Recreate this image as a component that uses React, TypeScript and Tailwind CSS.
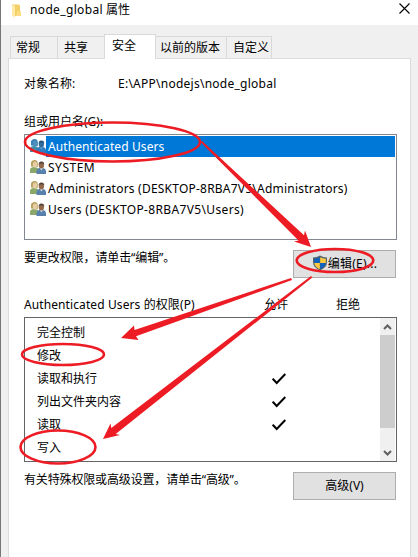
import type { ReactNode } from "react";

const principals = [
  { name: "Authenticated Users", track: "tracking-[0.100px]", selected: true },
  { name: "SYSTEM", track: "tracking-[0.500px]", selected: false },
  { name: "Administrators (DESKTOP-8RBA7V5\\Administrators)", track: "tracking-[0.220px]", selected: false },
  { name: "Users (DESKTOP-8RBA7V5\\Users)", track: "tracking-[0.350px]", selected: false },
];

const permissions = [
  { name: "完全控制", allow: false },
  { name: "修改", allow: false },
  { name: "读取和执行", allow: true },
  { name: "列出文件夹内容", allow: true },
  { name: "读取", allow: true },
  { name: "写入", allow: false },
];

function FolderIcon() {
  return (
    <svg className="h-4 w-4 shrink-0" viewBox="0 0 16 16">
      <path d="M4 2.5h7l1 1v10.5H4z" fill="#f3cf67" />
      <path d="M4 2.5l3 1.5v11.5l-3-1.8z" fill="#ffe9a6" />
      <path d="M9 9h4v5H8z" fill="#fbdc82" />
    </svg>
  );
}

function UsersIcon({ selected }: { selected: boolean }) {
  return (
    <svg className="relative -top-px h-4 w-4 shrink-0" viewBox="0 0 16 16">
      <path d="M0 14V10.5Q.5 8 4 8q4 0 5 3v3z" fill={selected ? "#3e8da9" : "#8aa86a"} />
      <path d="M1 7.5V3.5Q1.6 1 4.8 1 8 1.3 7.8 5v3z" fill={selected ? "#367fb8" : "#b8a060"} />
      <ellipse cx="5" cy="5.4" rx="2.2" ry="3" fill={selected ? "#4e8fbe" : "#e6cda4"} />
      <path d="M6.5 15v-3Q7 9 11 8.8q4.3.2 5 3V15z" fill={selected ? "#2f7dc0" : "#5880ad"} />
      <path d="M10 9l1.3 2.5L13 9z" fill={selected ? "#6aa9d8" : "#dce8ef"} />
      <ellipse cx="11.4" cy="6.3" rx="2.6" ry="3.3" fill={selected ? "#356a9c" : "#94684a"} />
      <path d="M8.6 5.8Q8.4 2.6 11.4 2.4q3.2.1 2.8 3.4l-1-1.2-3.6-.1z" fill={selected ? "#1d527d" : "#51433a"} />
    </svg>
  );
}

function ShieldIcon() {
  return (
    <svg className="relative -top-px h-4 w-4 shrink-0" viewBox="0 0 16 16">
      <path d="M8 .5Q11 2.5 15 2.5V7q0 5.5-7 8.5Q1 12.500 1 7V2.500Q5 2.500 8 .5z" fill="#55616b" />
      <path d="M7.800 2.200V8H2.200V3.700Q5.300 3.500 7.800 2.200z" fill="#0c62be" />
      <path d="M8.200 2.200V8h5.600V3.700Q10.700 3.500 8.200 2.200z" fill="#ffca3d" />
      <path d="M2.300 8h5.500v6.200Q2.800 12 2.300 8z" fill="#ffca3d" />
      <path d="M8.200 8h5.500q-.5 4-5.500 6.200z" fill="#0c62be" />
    </svg>
  );
}

function Check() {
  return (
    <svg className="h-3 w-[14px]" viewBox="0 0 14 12" fill="none" stroke="#000" strokeWidth="2">
      <path d="M.7 5.700L4.700 10 13.300 1" />
    </svg>
  );
}

function Chevron({ down = false }: { down?: boolean }) {
  return (
    <svg className="h-[17px] w-[15px] shrink-0" viewBox="0 0 15 17" fill="none" stroke="#606060" strokeWidth="2">
      <path d={down ? "M4 7l3.500 3.500L11 7" : "M4 11l3.500-3.500L11 11"} />
    </svg>
  );
}

function Tab({ className, children }: { className: string; children: ReactNode }) {
  return <div className={`border-[#d9d9d9] ${className}`}>{children}</div>;
}

function Button({ children }: { children: ReactNode }) {
  return (
    <button className="flex h-7 w-[103px] shrink-0 items-center justify-center border border-[#adadad] bg-[#e1e1e1] leading-4">
      {children}
    </button>
  );
}

function Annotations() {
  return (
    <svg className="pointer-events-none absolute inset-0 h-[557px] w-[418px]" viewBox="0 0 418 557">
      <g fill="none" stroke="#ed1c24" strokeWidth="2.600">
        <ellipse cx="112.500" cy="142" rx="87.500" ry="19.500" />
        <ellipse cx="335" cy="260.500" rx="38.300" ry="11.500" />
        <ellipse cx="63" cy="354.500" rx="41" ry="10.500" />
        <ellipse cx="58" cy="447" rx="37.500" ry="16.500" />
      </g>
      <g fill="#ed1c24">
        <path d="M200.500 142L202 141 304 235.300 305 230.500 311 247 294 241.500 298.500 240.500z" />
        <path d="M291 278L292 280 136 336.300 138.500 340 121 338 134 325.500 134.500 330z" />
        <path d="M311 276L312.300 277.500 115.700 434 120 435 103 439 110.500 423.500 111.300 428z" />
      </g>
    </svg>
  );
}

export default function App() {
  return (
    <main className="relative flex h-[557px] w-[418px] flex-col overflow-hidden border-l border-[#777] bg-[#f0f0f0] font-['Noto_Sans','Noto_Sans_CJK_SC',sans-serif] text-[12px] whitespace-nowrap text-black">
      <header className="flex h-[25px] shrink-0 items-start justify-between bg-white pt-px pr-2 pl-[7px]">
        <div className="flex items-center gap-[6px]">
          <FolderIcon />
          <h1 className="text-[12px] leading-[17px]"><span className="tracking-[0.350px]">node_global</span> 属性</h1>
        </div>
        <svg className="mt-[2px] h-[11px] w-[11px]" viewBox="0 0 11 11" stroke="#000" strokeWidth="1.100">
          <path d="M.5.5l10 10M10.500.5l-10 10" />
        </svg>
      </header>

      <nav className="relative z-10 mt-[9px] ml-[9px] flex h-[25px] shrink-0 items-end leading-[22px]">
        <Tab className="mb-px h-[22px] w-[47px] border-t border-l pl-[5px]">常规</Tab>
        <Tab className="mb-px h-[22px] w-[47px] border-t border-l pl-[6px]">共享</Tab>
        <Tab className="h-[25px] w-[52px] border-x border-t bg-white pl-[7px]">安全</Tab>
        <Tab className="mb-px h-[22px] w-[70px] border-t pl-[4px]">以前的版本</Tab>
        <Tab className="mb-px h-[22px] w-[46px] border-x border-t pl-[6px]">自定义</Tab>
      </nav>

      <section className="-mt-px ml-[7px] flex w-[403px] grow flex-col border-x border-t border-[#dcdcdc] bg-white pr-[13px] pl-[15px]">
        <div className="mt-[16px] flex h-[18px] items-center">
          <span className="w-[94px]">对象名称:</span>
          <span className="tracking-[0.250px]">E:\APP\nodejs\node_global</span>
        </div>
        <div className="mt-5 h-[18px] leading-[18px]">组或用户名(G):</div>

        <ul className="mt-[3px] h-[106px] w-[373px] shrink-0 border border-[#828790] p-px">
          {principals.map((p) => (
            <li key={p.name} className="flex h-[21px] items-center pl-1">
              <UsersIcon selected={p.selected} />
              <span className={`h-[21px] grow pl-[2px] leading-[21px] ${p.track} ${p.selected ? "bg-[#0078d7] text-white" : ""}`}>
                {p.name}
              </span>
            </li>
          ))}
        </ul>

        <div className="mt-[10px] flex h-7 shrink-0 items-start justify-between pr-px">
          <span className="leading-[16px] tracking-[-0.100px]">要更改权限，请单击“编辑”。</span>
          <Button>
            <span className="flex">
              <ShieldIcon />
              <span className="tracking-[0.250px]">编辑(E)...</span>
            </span>
          </Button>
        </div>

        <div className="mt-[18px] flex h-[18px] items-center">
          <span className="w-[240px] tracking-[0.100px]">Authenticated Users 的权限(P)</span>
          <span className="w-[72px]">允许</span>
          <span>拒绝</span>
        </div>

        <div className="mt-[3px] flex h-[145px] w-[373px] shrink-0 border border-[#646464] pr-px">
          <ul className="grow pt-[3px]">
            {permissions.map((p) => (
              <li key={p.name} className="flex h-[23px] items-center pl-3">
                <span className="w-[235px]">{p.name}</span>
                {p.allow && <Check />}
              </li>
            ))}
          </ul>
          <div className="flex w-[15px] flex-col bg-[#f0f0f0]">
            <Chevron />
            <div className="h-[93px] bg-[#cdcdcd]" />
            <div className="mt-auto h-[17px]"><Chevron down /></div>
          </div>
        </div>

        <div className="mt-[10px] flex h-7 shrink-0 items-start justify-between pr-px">
          <span className="leading-[16px] tracking-[-0.150px]">有关特殊权限或高级设置，请单击“高级”。</span>
          <Button>高级(V)</Button>
        </div>
      </section>
      <div className="absolute inset-y-0 -left-px w-[418px]"><Annotations /></div>
    </main>
  );
}
